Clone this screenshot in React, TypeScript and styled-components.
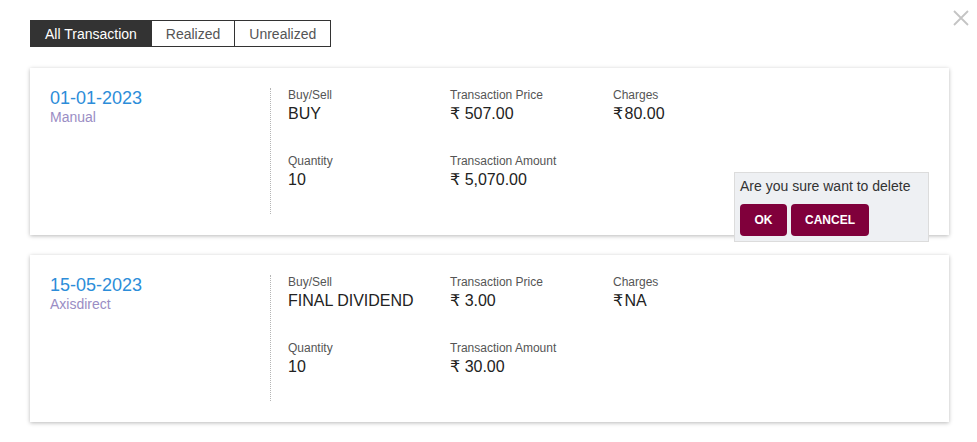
import React from "react";
import styled, { createGlobalStyle } from "styled-components";

const Global = createGlobalStyle`
  html, body { margin: 0; padding: 0; background: #fff; }
  body { font-family: "Liberation Sans", Arial, "DejaVu Sans", sans-serif; color: #222; }
  * { box-sizing: border-box; }
`;

const Page = styled.div`
  position: relative;
  width: 977px;
  height: 442px;
  padding: 20px 28px 0 30px;
  display: flex;
  flex-direction: column;
`;

const Close = styled.button`
  position: absolute;
  top: 9px;
  right: 7px;
  width: 18px;
  height: 18px;
  padding: 0;
  border: none;
  background: transparent;
  display: flex;
  align-items: center;
  justify-content: center;
`;

const Tabs = styled.div`
  display: flex;
  align-self: flex-start;
  border: 1px solid #333;
  height: 27px;
`;

const Tab = styled.div<{ $active?: boolean }>`
  display: flex;
  align-items: center;
  padding: 0 14px;
  font-size: 14px;
  background: ${(p) => (p.$active ? "#333" : "#fff")};
  color: ${(p) => (p.$active ? "#fff" : "#555")};
  & + & { border-left: 1px solid #333; }
`;

const List = styled.div`
  margin-top: 21px;
  display: flex;
  flex-direction: column;
  gap: 20px;
`;

const Card = styled.div`
  position: relative;
  width: 919px;
  background: #fff;
  box-shadow: 0 1px 4px rgba(0, 0, 0, 0.28);
  padding: 20px 20px 21px 20px;
  display: flex;
`;

const Left = styled.div`
  width: 220px;
  display: flex;
  flex-direction: column;
`;

const DateText = styled.div`
  font-size: 18px;
  line-height: 20px;
  color: #2c8dd9;
`;

const Source = styled.div`
  font-size: 14px;
  line-height: 18px;
  color: #9a8dc4;
`;

const Fields = styled.div`
  border-left: 1px dotted #b5b5b5;
  padding-left: 17px;
  height: 126px;
  display: grid;
  grid-template-columns: 162px 163px 160px;
  grid-auto-rows: min-content;
  row-gap: 30px;
`;

const Field = styled.div`
  display: flex;
  flex-direction: column;
`;

const Label = styled.div`
  font-size: 12px;
  line-height: 14px;
  color: #555;
`;

const Value = styled.div`
  margin-top: 2px;
  font-size: 16px;
  line-height: 20px;
  color: #222;
`;

const Confirm = styled.div`
  position: absolute;
  top: 104px;
  right: 20px;
  width: 195px;
  height: 70px;
  background: #eef0f3;
  border: 1px solid #dcdcdc;
  padding: 5px;
  display: flex;
  flex-direction: column;
  gap: 9px;
`;

const ConfirmText = styled.div`
  font-size: 14px;
  line-height: 17px;
  color: #333;
`;

const Buttons = styled.div`
  display: flex;
  gap: 4px;
`;

const Btn = styled.button<{ $w: number }>`
  width: ${(p) => p.$w}px;
  height: 32px;
  border: none;
  border-radius: 4px;
  background: #80003b;
  color: #fff;
  font-family: "Liberation Sans", Arial, sans-serif;
  font-size: 12px;
  font-weight: bold;
  padding: 0;
`;

type Tx = {
  date: string;
  source: string;
  type: string;
  price: string;
  charges: string;
  qty: string;
  amount: string;
  confirm?: boolean;
};

const data: Tx[] = [
  { date: "01-01-2023", source: "Manual", type: "BUY", price: "₹ 507.00", charges: "₹\u200A80.00", qty: "10", amount: "₹ 5,070.00", confirm: true },
  { date: "15-05-2023", source: "Axisdirect", type: "FINAL DIVIDEND", price: "₹ 3.00", charges: "₹\u200ANA", qty: "10", amount: "₹ 30.00" },
];

export default function App() {
  return (
    <>
      <Global />
      <Page>
        <Close aria-label="close">
          <svg width="16" height="16" viewBox="0 0 16 16">
            <path d="M1 1 L15 15 M15 1 L1 15" stroke="#c4c4c4" strokeWidth="1.8" />
          </svg>
        </Close>
        <Tabs>
          <Tab $active>All Transaction</Tab>
          <Tab>Realized</Tab>
          <Tab>Unrealized</Tab>
        </Tabs>
        <List>
          {data.map((t) => (
            <Card key={t.date}>
              <Left>
                <DateText>{t.date}</DateText>
                <Source>{t.source}</Source>
              </Left>
              <Fields>
                <Field>
                  <Label>Buy/Sell</Label>
                  <Value>{t.type}</Value>
                </Field>
                <Field>
                  <Label>Transaction Price</Label>
                  <Value>{t.price}</Value>
                </Field>
                <Field>
                  <Label>Charges</Label>
                  <Value>{t.charges}</Value>
                </Field>
                <Field>
                  <Label>Quantity</Label>
                  <Value>{t.qty}</Value>
                </Field>
                <Field>
                  <Label>Transaction Amount</Label>
                  <Value>{t.amount}</Value>
                </Field>
              </Fields>
              {t.confirm && (
                <Confirm>
                  <ConfirmText>Are you sure want to delete</ConfirmText>
                  <Buttons>
                    <Btn $w={47}>OK</Btn>
                    <Btn $w={78}>CANCEL</Btn>
                  </Buttons>
                </Confirm>
              )}
            </Card>
          ))}
        </List>
      </Page>
    </>
  );
}
